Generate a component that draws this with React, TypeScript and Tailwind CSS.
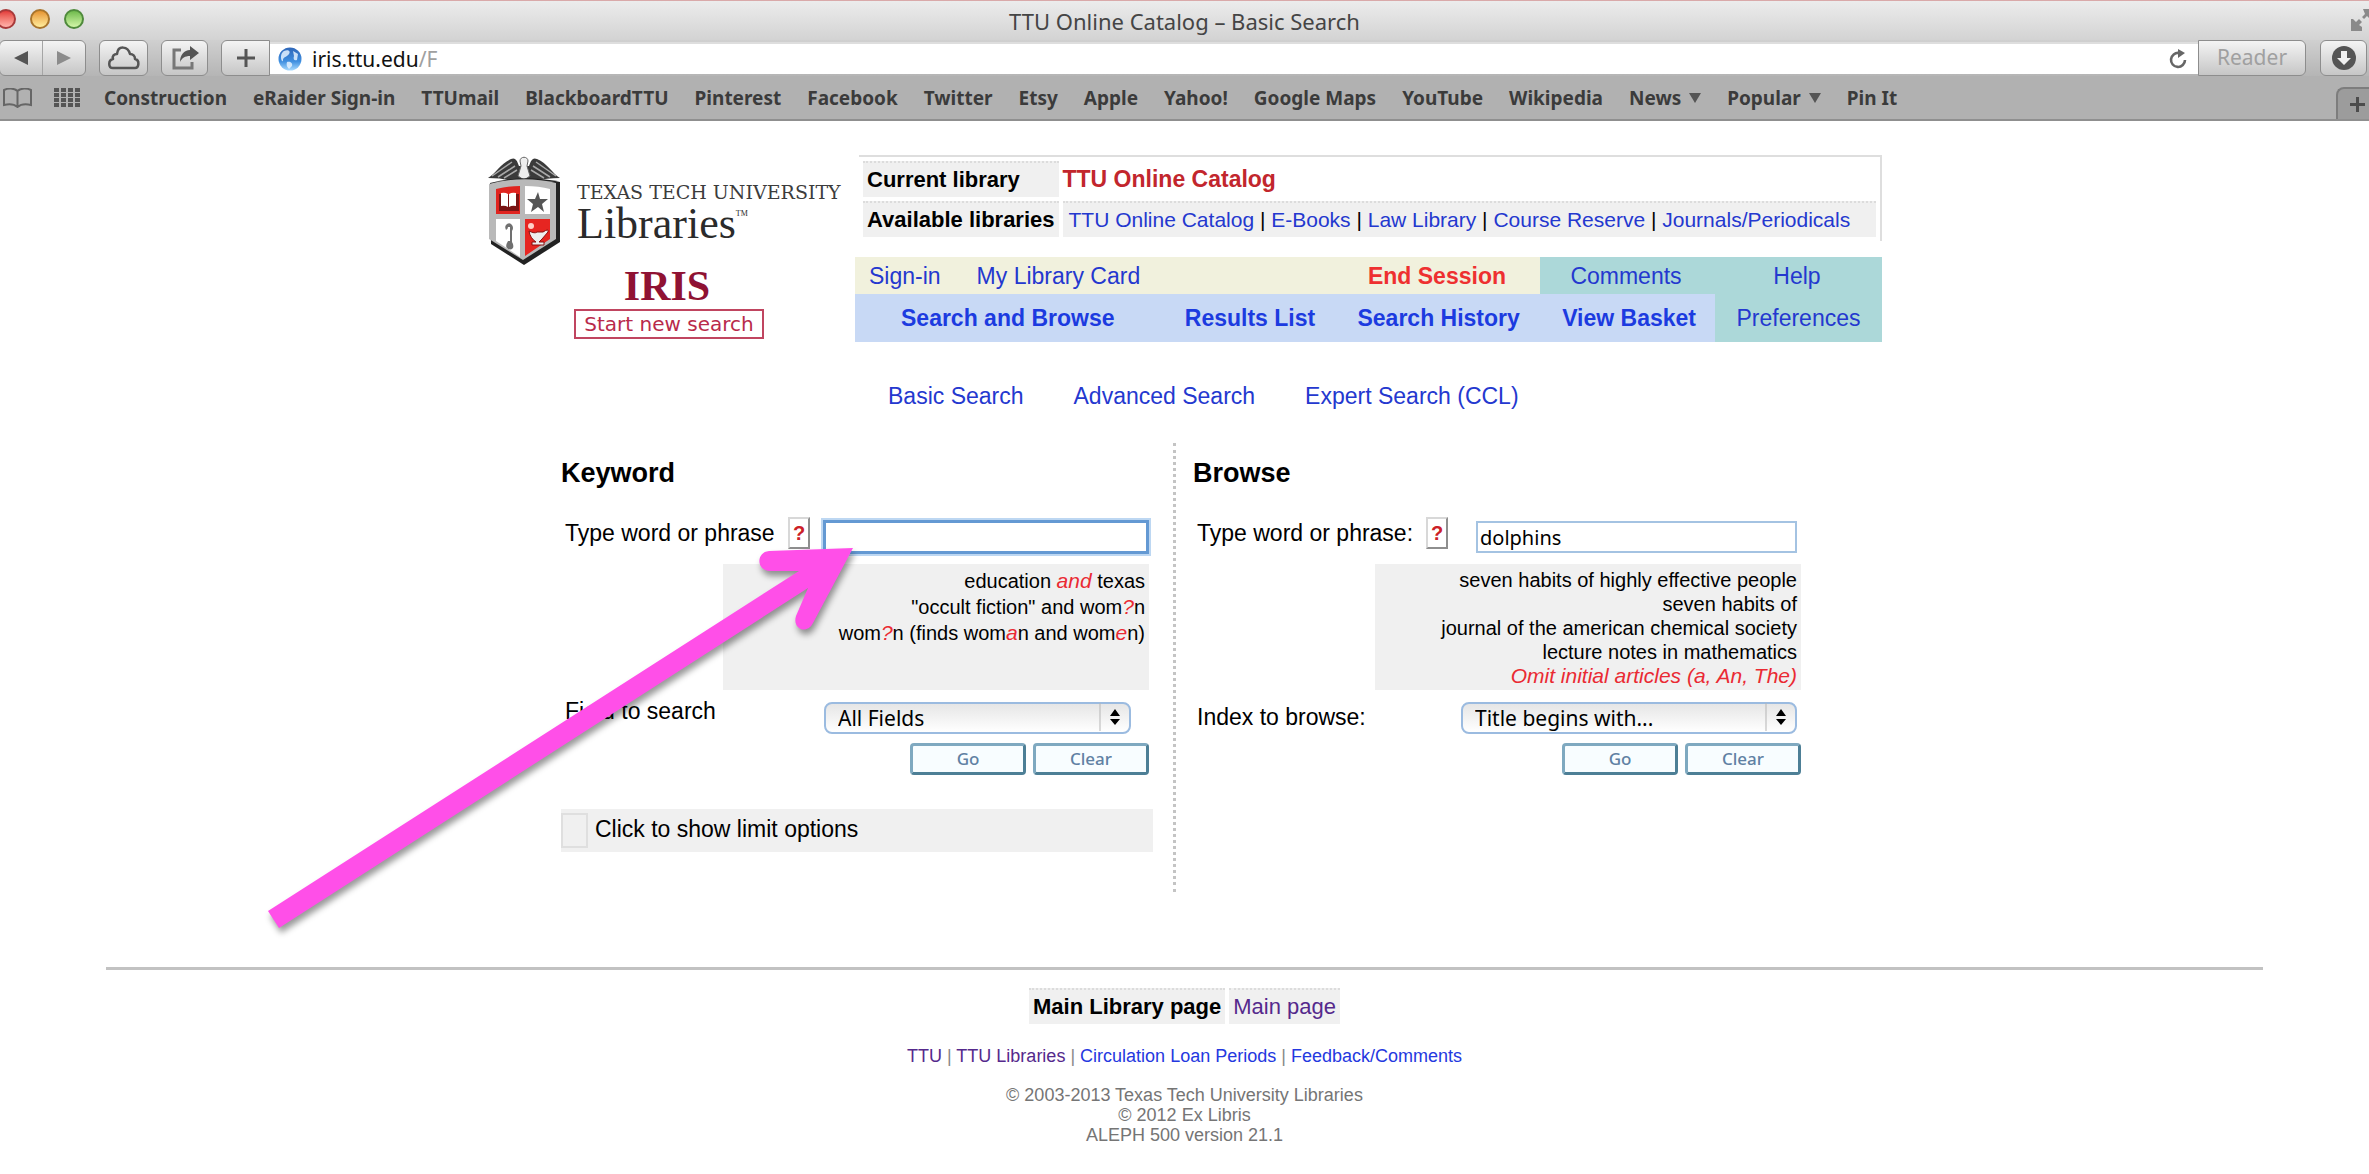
import type { ReactNode } from "react";

const bookmarks: { label: string; menu?: boolean }[] = [
  { label: "Construction" },
  { label: "eRaider Sign-in" },
  { label: "TTUmail" },
  { label: "BlackboardTTU" },
  { label: "Pinterest" },
  { label: "Facebook" },
  { label: "Twitter" },
  { label: "Etsy" },
  { label: "Apple" },
  { label: "Yahoo!" },
  { label: "Google Maps" },
  { label: "YouTube" },
  { label: "Wikipedia" },
  { label: "News", menu: true },
  { label: "Popular", menu: true },
  { label: "Pin It" },
];

const libraries = ["TTU Online Catalog", "E-Books", "Law Library", "Course Reserve", "Journals/Periodicals"];

const toolButton =
  "flex h-9 items-center justify-center rounded-md border border-[#8d8d8d] bg-linear-to-b from-[#f4f4f4] to-[#c6c6c6]";

function Chrome() {
  return (
    <header className="border-b-2 border-[#8f8f8f] bg-[#b1b1b1] font-['Noto_Sans','Open_Sans',sans-serif]">
      <div className="relative flex h-10 items-center justify-center border-t border-[#d9a9a9] bg-linear-to-b from-[#ececec] to-[#d3d3d3]">
        <div className="absolute left-0 top-2 flex gap-[14px]">
          <Light name="Close" className="-ml-1 border-[#a83a3a] from-[#e23b3b] to-[#ffb3ac]" />
          <Light name="Minimize" className="border-[#a9752c] from-[#e5942e] to-[#ffee9c]" />
          <Light name="Zoom" className="border-[#4f8a3c] from-[#6fba4c] to-[#d3f7a8]" />
        </div>
        <h1 className="text-[22px] leading-7 text-[#454545]">TTU Online Catalog – Basic Search</h1>
        <svg className="absolute right-0 top-1.5 h-6 w-5" viewBox="0 0 20 24" aria-hidden="true">
          <path d="M2 12h2l3 3 3-3 3 3-3 3 3 2v5H2z" fill="#8a8a8a" />
          <path d="M14 2h6v9l-2-2-3 3-2-2 3-3z" fill="#8a8a8a" />
        </svg>
      </div>

      <div className="flex h-9 items-center bg-linear-to-b from-[#d0d0d0] to-[#b5b5b5]">
        <div className={toolButton + " w-[87px] -ml-px"}>
          <button aria-label="Back" className="flex h-full flex-1 items-center justify-center border-r border-[#a5a5a5]">
            <svg className="h-4 w-4" viewBox="0 0 16 16"><path d="M15 1v14L1 8z" fill="#555" /></svg>
          </button>
          <button aria-label="Forward" className="flex h-full flex-1 items-center justify-center">
            <svg className="h-4 w-4" viewBox="0 0 16 16"><path d="M1 1v14l14-7z" fill="#8c8c8c" /></svg>
          </button>
        </div>
        <button aria-label="iCloud tabs" className={toolButton + " ml-[13px] w-[49px]"}>
          <svg className="h-7 w-9" viewBox="0 0 36 28" fill="none" stroke="#555" strokeWidth="2.5" strokeLinejoin="round">
            <path d="M7 24h22c4 0 5-8 0-9 0-3-2-5-5-5C22 2 12 1 11 10c-3 0-5 2-4 5-5 1-5 9 0 9z" />
          </svg>
        </button>
        <button aria-label="Share" className={toolButton + " ml-[13px] w-[47px]"}>
          <svg className="h-6 w-7" viewBox="0 0 28 24" fill="none" stroke="#777" strokeWidth="3">
            <path d="M10 4H3v18h18v-6" />
            <path d="M19 0l9 7-9 7v-4c-5 0-8 2-10 6 0-7 4-12 10-12z" fill="#555" stroke="none" />
          </svg>
        </button>
        <button aria-label="Add bookmark" className={toolButton + " ml-[13px] w-[49px] rounded-r-none"}>
          <svg className="h-[18px] w-[18px]" viewBox="0 0 18 18" stroke="#555" strokeWidth="3"><path d="M9 0v18M0 9h18" /></svg>
        </button>
        <div className="flex h-8 flex-1 items-center border-t-2 border-[#dedede] bg-white px-2">
          <svg className="h-6 w-6" viewBox="0 0 24 24" aria-hidden="true">
            <defs>
              <linearGradient id="globe" x1="0" y1="0" x2="0" y2="1">
                <stop offset="0" stopColor="#2e66b8" />
                <stop offset="0.6" stopColor="#3f8fe0" />
                <stop offset="1" stopColor="#a9dbff" />
              </linearGradient>
            </defs>
            <circle cx="12" cy="12" r="11.5" fill="url(#globe)" />
            <path d="M6 4c4-2 7 0 5 3s-6 3-6 6-2 0-2-2 0-5 3-7zM15 4l5 3-1 6c-3 1-4-1-3-4zM9 15c3-1 6 1 5 4l-3 3c-2-2-3-4-2-7z" fill="#e4f2ff" opacity="0.85" />
          </svg>
          <div className="ml-2.5 flex flex-1 items-center text-[21px] leading-7">
            <input aria-label="Address" defaultValue="iris.ttu.edu" className="field-sizing-content bg-transparent text-[#111] outline-none" />
            <span className="text-[#a0a0a0]">/F</span>
          </div>
          <button aria-label="Reload">
            <svg className="mr-0.5 h-5 w-5" viewBox="0 0 20 20" fill="none" stroke="#666" strokeWidth="2.6">
              <path d="M11 4a7 7 0 1 0 6 7" /><path d="M10 0l7 4-7 5z" fill="#666" stroke="none" />
            </svg>
          </button>
        </div>
        <button className={toolButton + " w-[108px] rounded-l-none text-[21px] text-[#a0a0a0]"}>Reader</button>
        <button aria-label="Downloads" className={toolButton + " mx-[14px] mr-[2px] w-[47px]"}>
          <svg className="h-6 w-6" viewBox="0 0 24 24"><circle cx="12" cy="12" r="12" fill="#555" /><path d="M9 5h6v7h4l-7 7-7-7h4z" fill="#f0f0f0" /></svg>
        </button>
      </div>

      <nav className="flex h-[43px] items-center pl-[3px]" aria-label="Bookmarks">
        <svg className="h-5 w-[29px]" viewBox="0 0 29 20" fill="none" stroke="#666" strokeWidth="2" aria-hidden="true">
          <path d="M14.500 3C11 0 5 0 1 2v15c4-1 10-1 13.500 2 3.500-3 9.500-3 13.500-2V2C24 0 18 0 14.500 3zM14.500 3v16" />
        </svg>
        <svg className="ml-[22px] h-5 w-[27px]" viewBox="0 0 27 20" fill="#555" aria-hidden="true">
          {[0, 5, 10, 15].map((y) => [0, 7, 14, 21].map((x) => <rect key={x + "-" + y} x={x} y={y} width="5" height="4" />))}
        </svg>
        <ul className="ml-[23px] flex flex-1 items-center gap-[26px] text-[19px] font-bold leading-7 text-[#3b3b3b]">
          {bookmarks.map((b) => (
            <li key={b.label}>
              <a href="#" className="flex items-center gap-2 whitespace-nowrap">
                {b.label}
                {b.menu && <svg className="h-[10px] w-3" viewBox="0 0 12 10"><path d="M0 0h12L6 10z" fill="#555" /></svg>}
              </a>
            </li>
          ))}
        </ul>
        <button aria-label="New tab" className="flex h-8 w-[33px] items-center justify-center self-end rounded-tl-lg border-l-2 border-t-2 border-[#7d7d7d] bg-[#9c9c9c]">
          <svg className="ml-2 h-[15px] w-[15px]" viewBox="0 0 15 15" stroke="#4c4c4c" strokeWidth="3"><path d="M7.500 0v15M0 7.500h15" /></svg>
        </button>
      </nav>
    </header>
  );
}

function Light({ name, className }: { name: string; className: string }) {
  return <button aria-label={name} className={"h-5 w-5 rounded-full border-2 bg-linear-to-b " + className} />;
}

function Shield() {
  return (
    <svg className="h-[110px] w-[74px] shrink-0" viewBox="0 0 74 110" aria-label="Texas Tech shield" role="img">
      <path d="M1 23C8 19 14 8 24 4c4-2 6 1 8 7h10c2-6 4-9 8-7 10 4 16 15 23 19-9 0-17 1-24 3H25C18 24 10 23 1 23z" fill="#3a3a3a" />
      <path d="M5 21L25 7M11 22l17-11M17 23l13-8M69 21L49 7M63 22L46 11M57 23l-13-8" stroke="#a8a8a8" strokeWidth="1.500" />
      <path d="M33 6c0-5 8-5 8 0l-1 5 3 10-6 4-6-4 3-10z" fill="#eee" stroke="#666" />
      <path d="M3 28q34-9 70-1v60l-36 23L4 89z" fill="#222" />
      <path d="M2 29q34-9 67-1v56l-33 21L2 84z" fill="#b9b9b9" />
      <path d="M9 34q13-3 24-3v28H9z" fill="#e0241f" />
      <path d="M38 31q14 0 25 3v25H38z" fill="#fff" />
      <path d="M9 64h24v38L9 86z" fill="#fff" />
      <path d="M38 64h25v20l-25 17z" fill="#e62521" />
      <path d="M12 39h8l2 1 2-1h8v17H12z" fill="#7a1414" />
      <path d="M14 38q4-1 7 1v13q-3-2-7-1zM22 39q3-2 7-1v13q-4-1-7 1z" fill="#fff" />
      <path d="M51 37l2 7h8l-6 5 2 8-6-5-7 5 2-8-6-5h8z" fill="#555" />
      <path d="M20 69q-3 2-1 6 2-1 2-3h2v14h-2q-3 5-1 7 3 3 6 0 1-3-1-6V76q2-3 0-6-2-3-5-1z" fill="#707070" />
      <path d="M42 76q6 3 8 1h6q6-4 5 0l-6 7-3 3h5v3H45v-3h4q-6-4-7-11z" fill="#eee" stroke="#811" />
      <circle cx="44" cy="71" r="3" fill="#ffd0c8" />
    </svg>
  );
}

function Brand() {
  return (
    <div className="flex w-[368px] shrink-0 flex-col items-center">
      <a href="#" className="flex w-full">
        <Shield />
        <span className="ml-4 mt-[25px] block font-['DejaVu_Serif',serif] text-[#3c3c3c]">
          <span className="block whitespace-nowrap text-[19px] leading-6">TEXAS TECH UNIVERSITY</span>
          <span className="flex items-start font-['Liberation_Serif',serif] text-[44px] leading-10 text-[#2b2b2b]">
            Libraries<sup className="mt-2 text-[8px] leading-3">TM</sup>
          </span>
        </span>
      </a>
      <p className="-mt-0.5 pr-2 font-['Liberation_Serif',serif] text-[42px] font-bold leading-[46px] text-[#8f1233]">IRIS</p>
      <a href="#" className="mr-1 flex h-[30px] items-center border-2 border-[#c04560] px-2 font-['DejaVu_Sans',sans-serif] text-[20px] text-[#b92a4b]">
        Start new search
      </a>
    </div>
  );
}

function Catalog() {
  return (
    <div className="min-w-0 flex-1">
      <div className="ml-1 border-r-2 border-t-2 border-[#dedede]">
        <table className="w-full border-separate border-spacing-1 text-left">
          <tbody>
            <tr className="h-9">
              <th scope="row" className="w-[194px] whitespace-nowrap border-t-2 border-dotted border-[#dcdcdc] bg-[#f0f0f0] px-1 text-[22px] leading-7">Current library</th>
              <td className="text-[23px] font-bold leading-7 text-[#c2262d]">TTU Online Catalog</td>
            </tr>
            <tr className="h-9">
              <th scope="row" className="whitespace-nowrap border-t-2 border-dotted border-[#dcdcdc] bg-[#f0f0f0] px-1 text-[22px] leading-7">Available libraries</th>
              <td className="whitespace-nowrap border-t-2 border-dotted border-[#dcdcdc] bg-[#f0f0f0] px-1.5 text-[21px] leading-7">
                {libraries.map((l, i) => (
                  <span key={l}>
                    {i > 0 && " | "}
                    <a href="#" className="text-[#2438cf]">{l}</a>
                  </span>
                ))}
              </td>
            </tr>
          </tbody>
        </table>
      </div>

      <nav className="mt-4 text-[23px] leading-7 text-[#2438cf]" aria-label="Catalog">
        <div className="flex h-[37px] bg-[#f1f1dd]">
          <div className="flex flex-1 items-center pl-[14px]">
            <a href="#">Sign-in</a>
            <a href="#" className="ml-9">My Library Card</a>
            <a href="#" className="ml-auto mr-[34px] font-bold text-[#ee3030]">End Session</a>
          </div>
          <div className="flex w-[342px] items-center bg-[#acd8d9] text-center">
            <a href="#" className="w-[172px]">Comments</a>
            <a href="#" className="flex-1">Help</a>
          </div>
        </div>
        <div className="flex h-12 bg-[#c8d9f5]">
          <div className="flex flex-1 items-center justify-between pl-[46px] pr-[19px] font-bold text-[#1c3be0]">
            <a href="#" className="mr-7">Search and Browse</a>
            <a href="#">Results List</a>
            <a href="#">Search History</a>
            <a href="#">View Basket</a>
          </div>
          <a href="#" className="flex w-[167px] items-center justify-center bg-[#acd8d9]">Preferences</a>
        </div>
      </nav>

      <nav className="mt-10 flex gap-[50px] pl-[33px] text-[23px] leading-7 text-[#2438cf]" aria-label="Search types">
        <a href="#">Basic Search</a>
        <a href="#">Advanced Search</a>
        <a href="#">Expert Search (CCL)</a>
      </nav>
    </div>
  );
}

function HelpButton() {
  return (
    <button aria-label="Help" className="flex h-8 w-[22px] items-center justify-center border-2 border-b-[#8e8e8e] border-l-[#d8d8d8] border-r-[#8e8e8e] border-t-[#d8d8d8] bg-white text-xl font-bold text-[#cc2027]">
      ?
    </button>
  );
}

function Picker({ id, value, className }: { id: string; value: string; className: string }) {
  return (
    <div className={"relative h-8 " + className}>
      <select
        id={id}
        className="h-full w-full appearance-none rounded-lg border-2 border-[#9bbbe0] bg-linear-to-b from-[#e6e6e6] to-white pl-3 font-['Noto_Sans','Open_Sans',sans-serif] text-[21px] leading-7 text-black outline-none"
      >
        <option>{value}</option>
      </select>
      <svg className="pointer-events-none absolute right-1 top-0.5 h-7 w-7" viewBox="0 0 28 28" aria-hidden="true">
        <path d="M1 0v28" stroke="#b5b5b5" />
        <path d="M16 6l5 7H11zM16 22l5-6H11z" fill="#000" />
      </svg>
    </div>
  );
}

function Actions() {
  const cls =
    "h-8 w-[116px] rounded-sm border-[3px] border-b-[#4d7f96] border-l-[#7fa9c0] border-r-[#4d7f96] border-t-[#7fa9c0] bg-[#f8fdff] font-['Noto_Sans','Open_Sans',sans-serif] text-[17px] leading-5 font-medium text-[#6081a3]";
  return (
    <div className="mt-[10px] flex justify-end gap-[7px]">
      <button type="submit" className={cls}>Go</button>
      <button type="reset" className={cls}>Clear</button>
    </div>
  );
}

function Hit({ children }: { children: ReactNode }) {
  return <em className="text-[21px] font-normal italic text-[#ea2a33]">{children}</em>;
}

function Searches() {
  return (
    <div className="mt-[33px] flex pl-[74px] text-[23px]">
      <section className="w-[612px] pb-[40px] pr-[20px] pt-[14px]">
        <h2 className="text-[27px] font-bold leading-8">Keyword</h2>
        <form className="pr-1" onSubmit={(e) => e.preventDefault()}>
          <div className="mt-[28px] flex h-9 pl-1">
            <label htmlFor="kw" className="w-[223px] whitespace-nowrap leading-8">Type word or phrase</label>
            <HelpButton />
            <input id="kw" className="ml-[13px] mt-[3px] h-[34px] min-w-0 flex-1 border-[3px] border-[#6499d3] bg-white px-1 outline-2 outline-[#bdd7f2]" />
          </div>
          <div className="ml-[162px] mt-[11px] h-[126px] bg-[#f0f0f0] px-1 pt-1 text-right text-[20px] leading-[25px]">
            <p>education <Hit>and</Hit> texas</p>
            <p>"occult fiction" and wom<Hit>?</Hit>n</p>
            <p>wom<Hit>?</Hit>n (finds wom<Hit>a</Hit>n and wom<Hit>e</Hit>n)</p>
          </div>
          <div className="mt-[11px] flex justify-between pl-1 pr-[18px]">
            <label htmlFor="field" className="-mt-1.5 leading-8">Field to search</label>
            <Picker id="field" value="All Fields" className="w-[307px]" />
          </div>
          <Actions />
        </form>
        <label className="mt-[34px] flex h-[43px] bg-[#f0f0f0] pt-1">
          <input type="checkbox" className="h-[35px] w-[27px] appearance-none border-2 border-[#dfdfdf]" />
          <span className="ml-[7px] leading-8">Click to show limit options</span>
        </label>
      </section>

      <section className="w-[628px] border-l-[3px] border-dotted border-[#c4c4c4] pl-[17px] pt-[14px]">
        <h2 className="text-[27px] font-bold leading-8">Browse</h2>
        <form onSubmit={(e) => e.preventDefault()}>
          <div className="mt-[28px] flex h-9 pl-1 pr-1">
            <label htmlFor="br" className="w-[229px] whitespace-nowrap leading-8">Type word or phrase:</label>
            <HelpButton />
            <input id="br" defaultValue="dolphins" className="ml-[28px] mt-1 h-8 min-w-0 flex-1 border-2 border-[#a4c3e2] bg-white px-0.5 font-['Noto_Sans','Open_Sans',sans-serif] text-[20px] outline-none" />
          </div>
          <div className="ml-[182px] mt-[11px] h-[126px] bg-[#f0f0f0] px-1 pt-1 text-right text-[20px] leading-[24px]">
            <p>seven habits of highly effective people</p>
            <p>seven habits of</p>
            <p>journal of the american chemical society</p>
            <p>lecture notes in mathematics</p>
            <p><Hit>Omit initial articles (a, An, The)</Hit></p>
          </div>
          <div className="mt-[11px] flex justify-between pl-1 pr-1">
            <label htmlFor="index" className="leading-8">Index to browse:</label>
            <Picker id="index" value="Title begins with..." className="w-[336px]" />
          </div>
          <Actions />
        </form>
      </section>
    </div>
  );
}

function Arrow() {
  return (
    <svg className="pointer-events-none absolute -left-[228px] top-[386px] h-[410px] w-[610px] overflow-visible drop-shadow-[2px_5px_3px_rgba(0,0,0,0.4)]" viewBox="260 540 610 410" aria-hidden="true">
      <path d="M269 910L800 570H771C757 570 757 551 770 550L854 547L814 622C808 634 793 628 797 615L809 587L280 927Z" fill="#ff4fe8" />
    </svg>
  );
}

function Footer() {
  return (
    <footer className="mx-[106px] mt-[75px] flex flex-col items-center border-t-[3px] border-[#c2c2c2] pt-[14px]">
      <table className="border-separate border-spacing-1 text-[22px] leading-7">
        <tbody>
          <tr className="h-9">
            <th scope="row" className="border-t-2 border-dotted border-[#dcdcdc] bg-[#f0f0f0] px-1">Main Library page</th>
            <td className="border-t-2 border-dotted border-[#dcdcdc] bg-[#f0f0f0] px-1"><a href="#" className="text-[#55298c]">Main page</a></td>
          </tr>
        </tbody>
      </table>
      <p className="mt-[14px] text-[18px] leading-7 text-[#888]">
        <a href="#" className="text-[#55298c]">TTU</a> | <a href="#" className="text-[#55298c]">TTU Libraries</a> |{" "}
        <a href="#" className="text-[#2438e0]">Circulation Loan Periods</a> | <a href="#" className="text-[#2438e0]">Feedback/Comments</a>
      </p>
      <div className="mt-[15px] text-center text-[18px] leading-5 text-[#757575]">
        <p>© 2003-2013 Texas Tech University Libraries</p>
        <p>© 2012 Ex Libris</p>
        <p>ALEPH 500 version 21.1</p>
      </div>
    </footer>
  );
}

export default function App() {
  return (
    <div className="bg-white font-['Liberation_Sans',Arial,sans-serif] text-black">
      <Chrome />
      <main className="relative mx-auto mt-[34px] w-full max-w-[1395px]">
        <div className="flex items-start">
          <Brand />
          <Catalog />
        </div>
        <Searches />
        <Arrow />
      </main>
      <Footer />
    </div>
  );
}
